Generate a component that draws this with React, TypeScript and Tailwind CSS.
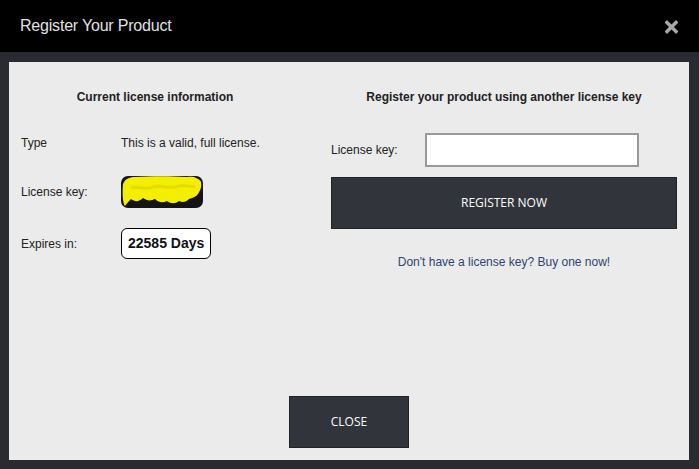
import React from "react";

export default function App() {
  const sans = { fontFamily: '"Liberation Sans", Arial, sans-serif' };
  const btnFont = { fontFamily: '"Open Sans", "Noto Sans", sans-serif' };
  return (
    <div className="w-[699px] h-[469px] bg-black flex flex-col overflow-hidden" style={sans}>
      <div className="h-[52px] shrink-0 flex items-center justify-between pl-[20px] pr-[21px]">
        <span className="text-[16px] text-[#e0e0e0] tracking-[-0.2px]">Register Your Product</span>
        <svg width="13" height="14" viewBox="0 0 13 14" className="mt-[1px]">
          <path d="M2 2.5 L11 11.5 M11 2.5 L2 11.5" stroke="#a8a8a8" strokeWidth="3.4" strokeLinecap="square" />
        </svg>
      </div>
      <div className="flex-1 bg-[#2a2b30] pt-[10px] pl-[9px] pr-[10px] pb-[9px] flex">
        <div className="flex-1 bg-[#ebebeb] flex flex-col px-3 pt-[27px] pb-[12px] text-[#222] text-[12px]">
          <div className="grid grid-cols-[268px_346px] gap-x-[42px]">
            {/* Left column */}
            <div className="flex flex-col">
              <div className="h-[16px] leading-[16px] text-center font-bold text-[#222]">Current license information</div>
              <div className="mt-[28px] h-[20px] flex items-center">
                <span className="w-[100px]">Type</span>
                <span>This is a valid, full license.</span>
              </div>
              <div className="mt-[23px] h-[32px] flex items-center">
                <span className="w-[100px]">License key:</span>
                <div className="w-[82px] h-[32px] rounded-[7px] bg-[#141414] overflow-hidden">
                  <svg width="82" height="32" viewBox="0 0 82 32">
                    <path
                      d="M2,8 C4,3 8,1 14,1 C30,0 50,0 66,1 C72,0 78,2 80,6 C81,11 79,15 77,18 C75,21 71,22 68,23 C65,26 62,27 58,25 C54,28 50,28 46,25 C42,27 38,27 34,23 C30,25 26,25 22,22 C18,26 14,26 10,23 C8,25 6,27 4,30 C2,28 1,18 2,8 Z"
                      fill="#f4ee00"
                    />
                    <path d="M10,12 C18,9 24,15 32,11 C40,8 48,14 58,10 C64,8 70,12 74,10" stroke="#e6dc00" strokeWidth="3" fill="none" />
                  </svg>
                </div>
              </div>
              <div className="mt-[20px] h-[31px] flex items-center">
                <span className="w-[100px]">Expires in:</span>
                <div className="h-[31px] px-[6px] rounded-[6px] border border-black bg-white flex items-center text-[14px] font-bold text-[#111]">
                  22585 Days
                </div>
              </div>
            </div>
            {/* Right column */}
            <div className="flex flex-col">
              <div className="h-[16px] leading-[16px] text-center font-bold text-[#222]">Register your product using another license key</div>
              <div className="mt-[28px] h-[34px] flex items-center">
                <span className="w-[94px]">License key:</span>
                <div className="w-[214px] h-[34px] bg-white border-2 border-[#9a9a9a]" />
              </div>
              <div
                className="mt-[10px] h-[52px] bg-[#31343b] border border-[#202227] flex items-center justify-center text-white text-[12px]"
                style={btnFont}
              >
                REGISTER NOW
              </div>
              <div className="mt-[25px] h-[16px] leading-[16px] text-center text-[#2e4470]">
                Don't have a license key? Buy one now!
              </div>
            </div>
          </div>
          <div className="mt-auto flex justify-center">
            <div
              className="w-[120px] h-[52px] bg-[#31343b] border border-[#202227] flex items-center justify-center text-white text-[12px]"
              style={btnFont}
            >
              CLOSE
            </div>
          </div>
        </div>
      </div>
    </div>
  );
}
